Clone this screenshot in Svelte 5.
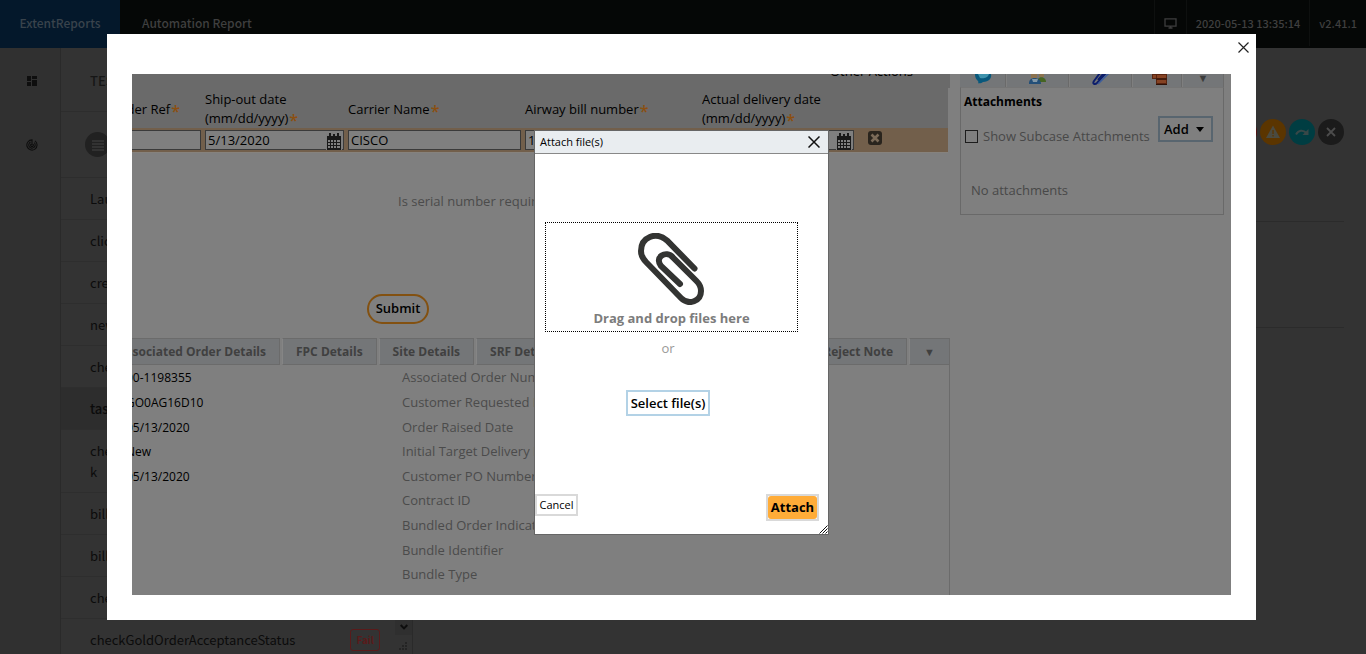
<script>
  const tests = [
    { name: 'Launch' },
    { name: 'click' },
    { name: 'create' },
    { name: 'newOrd' },
    { name: 'check' },
    { name: 'task', active: true },
    { name: 'check\nk' },
    { name: 'billing' },
    { name: 'billing' },
    { name: 'check' },
    { name: 'checkGoldOrderAcceptanceStatus', fail: true }
  ];

  const details = [
    ['00-1198355', 'Associated Order Number'],
    ['GO0AG16D10', 'Customer Requested Date'],
    ['05/13/2020', 'Order Raised Date'],
    ['New', 'Initial Target Delivery Date'],
    ['05/13/2020', 'Customer PO Number'],
    ['', 'Contract ID'],
    ['', 'Bundled Order Indicator'],
    ['', 'Bundle Identifier'],
    ['', 'Bundle Type']
  ];
</script>

{#snippet calendar()}
  <svg class="cal" viewBox="0 0 16 17" aria-hidden="true">
    <path fill="#7d7d7d" d="M0 1h16v16H0z" />
    <path fill="#191919" d="M1 3h14v14H1z" />
    <path stroke="#191919" stroke-width="2" d="M4 0v4M12 0v4M8 1v3" />
    <path fill="#808080" d="M2 7h2v2H2zM5 7h2v2H5zM8 7h2v2H8zM11 7h3v2h-3zM2 10h2v2H2zM5 10h2v2H5zM8 10h2v2H8zM11 10h3v2h-3zM2 13h2v2H2zM5 13h2v2H5zM8 13h2v2H8zM11 13h3v2h-3z" />
  </svg>
{/snippet}

<div class="report">
  <header>
    <a class="brand" href="#home">ExtentReports</a>
    <span class="name">Automation Report</span>
    <div class="meta">
      <span>
        <svg width="13" height="11" viewBox="0 0 13 11" fill="none" stroke="#3e3e3e" aria-hidden="true">
          <path d="M1 .8h11v7.4H1z" stroke-width="1.3" /><path d="M4.5 10h4M6.5 8v2" stroke-width="1.6" />
        </svg>
      </span>
      <span>2020-05-13 13:35:14</span>
      <span>v2.41.1</span>
    </div>
  </header>
  <div class="body">
    <nav>
      <a href="#tests" aria-label="Tests">
        <svg width="12" height="12" viewBox="0 0 12 12" fill="#0e0e0e"><path d="M1 1h4v5H1zM6 1h5v3H6zM1 7h4v4H1zM6 5h5v6H6z" /></svg>
      </a>
      <a href="#dashboard" aria-label="Dashboard">
        <svg width="12" height="12" viewBox="0 0 12 12" fill="none" stroke="#0e0e0e" stroke-width="1.1">
          <path d="M9 1.900A5.100 5.100 0 1 1 6 .9v5.300M4.500 3.100a3.200 3.200 0 1 0 3.800.6M5.200 5a1.400 1.400 0 1 0 1.800.1" />
        </svg>
      </a>
    </nav>
    <section class="list">
      <div class="entries">
        <div class="title">TESTS</div>
        <div class="filter">
          <button aria-label="Filter by status">
            <svg width="14" height="12" viewBox="0 0 14 12" stroke="#454545" stroke-width="1.2"><path d="M1 2h12M1 5h12M1 8h12M1 11h12" /></svg>
          </button>
        </div>
        {#each tests as t}
          <div class="test" class:active={t.active}>
            <span>{t.name}</span>
            {#if t.fail}<span class="fail">Fail</span>{/if}
          </div>
        {/each}
      </div>
      <div class="scroll">
        <div class="arrow"><svg width="8" height="6" viewBox="0 0 8 6" fill="none" stroke="#0d0d0d" stroke-width="2"><path d="M.7 1 4 4.4 7.3 1" /></svg></div>
        <svg class="grip" width="9" height="8" viewBox="0 0 9 8" fill="#242424"><path d="M6 0h2v2H6zM3 3h2v2H3zM6 3h2v2H6zM0 6h2v2H0zM3 6h2v2H3zM6 6h2v2H6z" /></svg>
      </div>
    </section>
    <section class="steps">
      <div class="chips">
        <button class="chip red" aria-label="Failed"></button>
        <button class="chip amber" aria-label="Warnings">
          <svg viewBox="0 0 26 26"><path fill="#4a4a40" fill-rule="evenodd" d="M13 6.5 20 19H6zM12.4 11v4h1.3v-4zM12.4 16v1.4h1.3V16z" /></svg>
        </button>
        <button class="chip teal" aria-label="Skipped">
          <svg viewBox="0 0 26 26"><path fill="none" stroke="#384848" stroke-width="2" d="M7 15.5c2.500-4.500 7-5 10.500-1.500" /><path fill="#384848" d="M19.500 10v6h-6z" /></svg>
        </button>
        <button class="chip dark" aria-label="Clear">
          <svg viewBox="0 0 26 26"><path stroke="#4c4c4c" stroke-width="1.800" d="m9 9 8 8M17 9l-8 8" /></svg>
        </button>
      </div>
      <div class="band"></div>
    </section>
  </div>
</div>

<div class="lightbox">
  <div class="frame">
    <button class="close" aria-label="Close">
      <svg width="11" height="11" viewBox="0 0 11 11" stroke="#222" stroke-width="1.200"><path d="m.5.5 10 10M10.500.5l-10 10" /></svg>
    </button>
    <div class="case">
      <main>
        <div class="actions"><span>Other Actions</span></div>
        <table>
          <thead>
            <tr>
              <th class="c1"><div class="end">Order Ref<i>*</i></div></th>
              <th class="c2">Ship-out date<br />(mm/dd/yyyy)<i>*</i></th>
              <th class="c3">Carrier Name<i>*</i></th>
              <th class="c3">Airway bill number<i>*</i></th>
              <th class="c4">Actual delivery date<br />(mm/dd/yyyy)<i>*</i></th>
              <th></th>
            </tr>
          </thead>
          <tbody>
            <tr>
              <td><div class="field first"><input aria-label="Order Ref" /></div></td>
              <td><div class="field"><input aria-label="Ship-out date" value="5/13/2020" />{@render calendar()}</div></td>
              <td><div class="field"><input aria-label="Carrier Name" value="CISCO" /></div></td>
              <td><div class="field"><input aria-label="Airway bill number" value="1" /></div></td>
              <td><div class="field last"><input aria-label="Actual delivery date" />{@render calendar()}</div></td>
              <td>
                <button class="remove" aria-label="Delete row">
                  <svg width="14" height="14" viewBox="0 0 14 14"><rect width="14" height="14" rx="3" fill="#29241d" /><path stroke="#7a6a58" stroke-width="2.600" d="m3.500 3.500 7 7M10.500 3.500l-7 7" /></svg>
                </button>
              </td>
            </tr>
          </tbody>
        </table>
        <p class="question">Is serial number required?</p>
        <button class="submit">Submit</button>
        <div class="tabs">
          <button class="tab t1">Associated Order Details</button>
          <button class="tab">FPC Details</button>
          <button class="tab">Site Details</button>
          <button class="tab wide">SRF Details</button>
          <button class="tab">Reject Note</button>
          <button class="tab more">▼</button>
        </div>
        <div class="details">
          {#each details as [value, label]}
            <div class="row"><span class="value">{value}</span><span class="label">{label}</span></div>
          {/each}
        </div>
      </main>
      <aside>
        <div class="side-tabs">
          <button aria-label="Pulse"><svg viewBox="0 0 20 14"><path fill="#08587c" d="M2 0h16c1 4-2 8-8 8-1 1-3 1.500-5 1.200C6 8 5 7 4 6 2.500 4.500 2 2 2 0z" /><path fill="#3f93ad" d="M5 0h11c-1 4-6 5-9 4z" /></svg></button>
          <button aria-label="Participants"><svg viewBox="0 0 20 14"><path fill="#8c7350" d="M3 0h6v4H3zM11 0h5v3h-5z" /><path fill="#456522" d="M10 8V5c2-3 8-2 8 3z" /><path fill="#244f78" d="M1 10c-1-8 12-8 12 0z" /><path fill="#8297a6" d="M4 5h6L9 8H5z" /></svg></button>
          <button aria-label="Attachments"><svg viewBox="0 0 20 14"><path fill="none" stroke="#0c1d6b" stroke-width="2" d="M9-1 3 7c-2 3 1 4 3 2l9-10M13-1 7 6" /><path fill="none" stroke="#3c5d9c" stroke-width="1.500" d="M18-1 7 10" /></svg></button>
          <button aria-label="Related cases"><svg viewBox="0 0 20 14"><path fill="#592410" d="M5 0h9v5H5zM9 0h11v11H9z" /><path fill="#854223" d="M10 1h9v3h-9zM10 6h9v3h-9zM6 1h3v3H6z" /><path stroke="#2f1208" d="M9 10.500h11M9 5h11" /></svg></button>
          <button class="menu" aria-label="More tools">▼</button>
        </div>
        <div class="panel">
          <h2>Attachments</h2>
          <div class="tools">
            <label><input type="checkbox" />Show Subcase Attachments</label>
            <button>Add<svg width="8" height="5" viewBox="0 0 8 5"><path d="M0 0h8L4 5z" /></svg></button>
          </div>
          <p>No attachments</p>
        </div>
      </aside>

      <div class="dialog" role="dialog" aria-labelledby="attach-title">
        <div class="bar">
          <span id="attach-title">Attach file(s)</span>
          <button aria-label="Close dialog">
            <svg width="12" height="12" viewBox="0 0 12 12" stroke="#111" stroke-width="1.500"><path d="m.5.5 11 11M11.500.5l-11 11" /></svg>
          </button>
        </div>
        <div class="drop">
          <svg width="68" height="72" viewBox="0 0 68 72" fill="none" stroke="#333432" stroke-width="6" stroke-linecap="round" aria-hidden="true">
            <path d="M56.500 35.500 29 7.500C18-2 3 4 3 18c0 5 2 8 5.500 11.500L43 65c8 8 20 3 20-7 0-4-1.500-7-4.500-10L35 24.500c-7-8-19 0-12 8.500l19 18" />
          </svg>
          <strong>Drag and drop files here</strong>
        </div>
        <span class="or">or</span>
        <button class="select">Select file(s)</button>
        <div class="foot">
          <button class="cancel">Cancel</button>
          <button class="attach"><span>Attach</span></button>
        </div>
        <svg class="resize" width="9" height="9" viewBox="0 0 9 9" stroke="#111" aria-hidden="true"><path d="m.5 8.500 8-8M3.500 8.500l5-5M6.500 8.500l2-2" /></svg>
      </div>
    </div>
  </div>
</div>

<style>
  :global(body) { margin: 0; background: #333; overflow: hidden; }
  * { box-sizing: border-box; }
  button, input { font: inherit; margin: 0; padding: 0; border: 0; background: none; color: inherit; border-radius: 0; }
  button, a { cursor: pointer; }
  svg { display: block; flex: none; }

  .report {
    height: 100vh; display: flex; flex-direction: column; overflow: hidden;
    font: 13px/21px "Noto Sans CJK SC", sans-serif; color: #0b0b0b; background: #333;
  }
  header { display: flex; flex: none; height: 48px; font-size: 12px; line-height: 46px; background: #050706; color: #3f3f3f; font-weight: 500; }
  .brand { width: 120px; text-align: center; background: #04182b; color: #39434c; text-decoration: none; }
  .name { padding-left: 22px; }
  .meta { margin-left: auto; display: flex; font-size: 11px; line-height: 47px; }
  .meta span { padding: 0 9px; border-left: 1px solid #0e100f; display: flex; align-items: center; height: 46px; }
  .body { flex: 1; min-height: 0; display: flex; }
  nav { width: 61px; flex: none; background: #303030; border-right: 1px solid #2a2a2a; padding: 27px 0 0 26px; }
  nav a { display: block; height: 64px; }
  .list { width: 352px; flex: none; display: flex; border-right: 1px solid #2a2a2a; overflow: hidden; }
  .entries { flex: 1; min-width: 0; }
  .title { height: 64px; line-height: 66px; padding-left: 29px; border-bottom: 1px solid #2d2d2d; font-weight: 500; color: #161616; }
  .filter { height: 66px; padding: 20px 0 0 24px; border-bottom: 1px solid #2d2d2d; }
  .filter button { width: 25px; height: 25px; border-radius: 50%; background: #212121; display: grid; place-items: center; }
  .test { display: flex; justify-content: space-between; align-items: center; padding: 10px 15px 10px 29px; border-bottom: 1px solid #2e2e2e; white-space: pre-line; }
  .active { background: #2d2d2d; font-weight: 500; }
  .fail { border: 1px solid #5a1a1a; border-radius: 3px; color: #5a1a1a; font-size: 10px; line-height: 20px; padding: 0 5px; font-weight: 700; margin: -1px 0; }
  .scroll { width: 17px; display: flex; flex-direction: column; justify-content: flex-end; align-items: center; }
  .arrow { width: 17px; height: 17px; background: #2f2f2f; display: grid; place-items: center; margin-bottom: 7px; }
  .grip { margin-bottom: 4px; }
  .steps { flex: 1; min-width: 0; padding: 71px 22px 0 24px; }
  .chips { display: flex; justify-content: flex-end; gap: 3px; height: 102px; }
  .chip { width: 26px; height: 26px; border-radius: 50%; }
  .red { background: #531010; }
  .amber { background: #5b3500; }
  .teal { background: #003d42; }
  .dark { background: #1b1b1b; }
  .band { height: 107px; border: solid #2b2b2b; border-width: 1px 0; }

  .lightbox { position: fixed; inset: 0; padding: 34px 110px 34px 107px; display: flex; font: 13px/19px "Open Sans", sans-serif; color: #000; }
  .frame { flex: 1; min-width: 0; background: #fff; padding: 8px 25px 25px; display: flex; flex-direction: column; }
  .close { align-self: flex-end; width: 11px; height: 32px; padding-bottom: 22px; margin-right: -18px; }
  .case { position: relative; flex: 1; min-height: 0; display: flex; gap: 10px; padding-right: 7px; background: #7f7f7f; overflow: hidden; }
  main { flex: 1; min-width: 0; display: flex; flex-direction: column; }
  .actions { flex: none; height: 14px; background: #6a6a6a; overflow: hidden; padding-right: 37px; display: flex; justify-content: flex-end; }
  .actions span { margin-top: -12px; }
  table { border-collapse: collapse; table-layout: fixed; width: calc(100% - 2px); background: #6a6a6a; flex: none; }
  th { height: 40px; padding: 2px 0 0; text-align: left; font-weight: 400; }
  th i { font-style: normal; font-weight: 600; font-size: 16px; line-height: 16px; color: #8b4f10; margin-left: 1px; vertical-align: -3px; }
  .end { display: flex; justify-content: flex-end; width: 48px; overflow: hidden; white-space: nowrap; }
  .end i { padding-top: 3px; }
  .c1 { width: 73px; }
  .c2 { width: 143px; }
  .c3 { width: 177px; }
  .c4 { width: 152px; }
  td { padding: 2px 0 1px; background: #725f4b; border-bottom: 1px solid #86827d; height: 24px; }
  .field { display: flex; margin-right: 4px; height: 20px; border: 1px solid #3a3a3a; background: #7f7f7f; }
  .first { border-left: 0; }
  .last { margin-right: 0; }
  .field input { flex: 1; min-width: 0; padding-left: 2px; line-height: 18px; }
  .cal { width: 16px; height: 17px; margin: 2px 1px 0 0; }
  .remove { display: block; margin: -5px 0 0 14px; }
  .question { margin: 39px 0 0 266px; color: #4b4b4b; line-height: 18px; }
  .submit { flex: none; width: 62px; height: 30px; margin: 84px 0 14px 235px; border: 2px solid #835111; border-radius: 15px; font-weight: 600; }
  .tabs { flex: none; display: flex; gap: 2px; height: 27px; }
  .tab { height: 27px; padding: 0 13px; border: 1px solid #6b6b6b; border-left-color: #858585; background: #747678; font-weight: 700; font-size: 12px; color: #404040; white-space: nowrap; }
  .t1 { width: 148px; display: flex; justify-content: flex-end; align-items: center; overflow: hidden; border-left: 0; }
  .wide { flex: 1; text-align: left; }
  .more { width: 41px; font-size: 11px; }
  .details { flex: 1; min-height: 0; display: grid; grid-template-rows: repeat(9, 1fr); padding: 1px 0 8px; border-right: 1px solid #6b6b6b; }
  .row { display: grid; grid-template-columns: 270px 1fr; align-items: center; }
  .value { font-size: 12px; white-space: nowrap; margin-left: -6px; }
  .label { color: #4b4b4b; white-space: nowrap; }

  aside { width: 264px; flex: none; }
  .side-tabs { display: grid; grid-template-columns: 46fr 62fr 62fr 49fr 41px; height: 13px; gap: 1px; overflow: hidden; }
  .side-tabs button { min-width: 0; background: #747678; border-right: 1px solid #6a6a6a; border-bottom: 1px solid #6a6a6a; display: grid; place-items: start center; align-content: start; }
  .side-tabs button svg { width: 20px; height: 14px; }
  .side-tabs .menu { font-size: 11px; line-height: 8px; color: #3c3c3c; }
  .panel { height: 128px; border: 1px solid #696969; border-top-color: #757575; padding: 4px 10px 0 3px; }
  h2 { margin: 0; font-size: 12px; font-weight: 700; line-height: 20px; }
  .tools { display: flex; justify-content: space-between; padding-top: 4px; }
  .tools label { display: flex; align-items: center; height: 40px; color: #484848; }
  .tools input { appearance: none; width: 13px; height: 13px; border: 1px solid #1c1c1c; margin: 0 5px 0 1px; }
  .tools button { width: 55px; height: 26px; border: 2px solid #58656f; font-weight: 600; display: flex; align-items: center; gap: 7px; padding-left: 4px; }
  .panel p { margin: 25px 0 0 7px; color: #484848; }

  .dialog { position: absolute; left: 402px; top: 56px; width: 295px; height: 405px; border: 1px solid #666; background: #fff; display: flex; flex-direction: column; align-items: center; padding-right: 27px; }
  .bar { align-self: stretch; flex: none; margin-right: -27px; height: 23px; padding: 0 8px 0 5px; background: #e9edf0; border-bottom: 1px solid #888; display: flex; justify-content: space-between; align-items: center; font-size: 11px; line-height: 16px; }
  .bar span { padding-bottom: 1px; }
  .drop { align-self: stretch; flex: none; height: 110px; margin: 68px 3px 0 10px; border: 1px dotted #000; padding-top: 10px; display: flex; flex-direction: column; align-items: center; gap: 4px; color: #7c7c7c; }
  .or { margin-top: 7px; color: #999; }
  .select { margin-top: 32px; width: 84px; height: 26px; border: 2px solid #b3d2e6; font-weight: 600; line-height: 20px; padding-bottom: 1px; white-space: nowrap; flex: none; }
  .foot { align-self: stretch; margin: auto -18px 13px 0; display: flex; justify-content: space-between; align-items: flex-start; }
  .cancel { width: 43px; height: 22px; border: 2px solid #d9d9d9; font-size: 11px; line-height: 16px; padding-bottom: 1px; }
  .attach { width: 53px; height: 27px; border: 2px solid #d9d9d9; font-weight: 700; line-height: 23px; }
  .attach span { display: block; background: #ffac38; border-radius: 3px; }
  .resize { position: absolute; right: 0; bottom: 0; }
</style>
